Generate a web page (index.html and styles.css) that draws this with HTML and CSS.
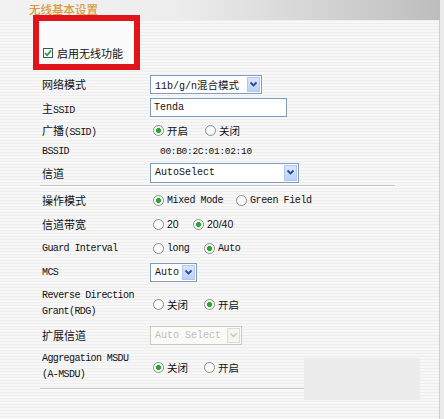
FILE: index.html
```html
<!DOCTYPE html>
<html>
<head>
<meta charset="utf-8">
<link rel="stylesheet" href="styles.css">
</head>
<body>
<div class="page">
  <div class="header"><span class="title">无线基本设置</span></div>
  <div class="enable">
    <span class="cb"><svg width="8" height="8" viewBox="0 0 8 8"><path d="M1 4 L3.2 6.2 L7 1.6" fill="none" stroke="#1f9a2a" stroke-width="1.6"/></svg></span>
    <span class="cn">启用无线功能</span>
  </div>
  <div class="form">
    <div class="row h24">
      <div class="lbl"><span class="cn">网络模式</span></div>
      <div class="val"><div class="sel w-mode"><span class="sel-text">11b/g/n<span class="cn s">混合模式</span></span><span class="arrow"><svg width="9" height="7" viewBox="0 0 9 7"><path d="M1.5 1.5 L4.5 4.5 L7.5 1.5" fill="none" stroke="#2b4a9a" stroke-width="1.8"/></svg></span></div></div>
    </div>
    <div class="row h23">
      <div class="lbl"><span class="cn">主</span>SSID</div>
      <div class="val"><div class="inp">Tenda</div></div>
    </div>
    <div class="row h22">
      <div class="lbl"><span class="cn">广播</span>(SSID)</div>
      <div class="val radios">
        <span class="opt o52"><span class="radio on"></span><span class="cn s">开启</span></span>
        <span class="opt"><span class="radio"></span><span class="cn s">关闭</span></span>
      </div>
    </div>
    <div class="row h21">
      <div class="lbl">BSSID</div>
      <div class="val mac">00:B0:2C:01:02:10</div>
    </div>
    <div class="row h21">
      <div class="lbl"><span class="cn">信道</span></div>
      <div class="val"><div class="sel w-chan"><span class="sel-text">AutoSelect</span><span class="arrow"><svg width="9" height="7" viewBox="0 0 9 7"><path d="M1.5 1.5 L4.5 4.5 L7.5 1.5" fill="none" stroke="#2b4a9a" stroke-width="1.8"/></svg></span></div></div>
    </div>
    <div class="sep"></div>
    <div class="row h24">
      <div class="lbl"><span class="cn">操作模式</span></div>
      <div class="val radios">
        <span class="opt o83"><span class="radio on"></span><span class="en">Mixed Mode</span></span>
        <span class="opt"><span class="radio"></span><span class="en">Green Field</span></span>
      </div>
    </div>
    <div class="row h24">
      <div class="lbl"><span class="cn">信道带宽</span></div>
      <div class="val radios">
        <span class="opt o40"><span class="radio"></span><span class="num">20</span></span>
        <span class="opt"><span class="radio on"></span><span class="num">20/40</span></span>
      </div>
    </div>
    <div class="row h24">
      <div class="lbl">Guard Interval</div>
      <div class="val radios">
        <span class="opt o51"><span class="radio"></span><span class="en">long</span></span>
        <span class="opt"><span class="radio on"></span><span class="en">Auto</span></span>
      </div>
    </div>
    <div class="row h24">
      <div class="lbl">MCS</div>
      <div class="val"><div class="sel w-mcs"><span class="sel-text">Auto</span><span class="arrow"><svg width="9" height="7" viewBox="0 0 9 7"><path d="M1.5 1.5 L4.5 4.5 L7.5 1.5" fill="none" stroke="#2b4a9a" stroke-width="1.8"/></svg></span></div></div>
    </div>
    <div class="row h40">
      <div class="lbl two">Reverse Direction<br>Grant(RDG)</div>
      <div class="val radios">
        <span class="opt o51"><span class="radio"></span><span class="cn s">关闭</span></span>
        <span class="opt"><span class="radio on"></span><span class="cn s">开启</span></span>
      </div>
    </div>
    <div class="row h22">
      <div class="lbl"><span class="cn">扩展信道</span></div>
      <div class="val"><div class="sel w-ext dis"><span class="sel-text">Auto Select</span><span class="arrow"><svg width="9" height="7" viewBox="0 0 9 7"><path d="M1.5 1.5 L4.5 4.5 L7.5 1.5" fill="none" stroke="#c4c4b4" stroke-width="1.4"/></svg></span></div></div>
    </div>
    <div class="row h42">
      <div class="lbl two">Aggregation MSDU<br>(A-MSDU)</div>
      <div class="val radios">
        <span class="opt o51"><span class="radio on"></span><span class="cn s">关闭</span></span>
        <span class="opt"><span class="radio"></span><span class="cn s">开启</span></span>
      </div>
    </div>
    <div class="sep bottom"></div>
  </div>
  <div class="watermark"></div>
</div>
</body>
</html>
```

FILE: styles.css
```css
* { box-sizing: border-box; }
html, body { margin: 0; padding: 0; }
body {
  width: 444px;
  height: 419px;
  overflow: hidden;
  color: #111;
  font-family: "Liberation Mono", "Noto Sans CJK SC", monospace;
}
.page {
  position: relative;
  width: 444px;
  height: 419px;
  background: repeating-linear-gradient(to bottom, #f7f7f7 0, #f7f7f7 2px, #eeeeee 2px, #eeeeee 3px);
  border-right: 4px solid #ececec;
  box-shadow: inset -1px 0 0 #cdcdcd;
}
.header {
  height: 20px;
  background: linear-gradient(to right, #f2f2f2 0%, #ededed 40%, #d6d6d6 70%, #bdbdbd 100%);
  padding-left: 29px;
  line-height: 18px;
}
.title {
  font-family: "Noto Sans CJK SC", sans-serif;
  font-size: 11.5px;
  font-weight: 500;
  color: #dd9a3c;
}
.cn {
  font-family: "Noto Sans CJK SC", sans-serif;
  font-size: 11px;
}
.cn.s { font-size: 10.5px; }
.enable {
  margin-left: 33px;
  margin-top: -5px;
  width: 107px;
  height: 55px;
  border: 6px solid #e1141b;
  background: #fbfbfb;
  display: flex;
  align-items: center;
  padding: 20px 0 0 4px;
  gap: 4px;
}
.cb {
  width: 10px;
  height: 10px;
  border: 1px solid #3a5a6a;
  background: #fff;
  display: flex;
  align-items: center;
  justify-content: center;
}
.form {
  margin-left: 40px;
  margin-top: 2px;
  width: 355px;
}
.row {
  display: flex;
  align-items: center;
}
.h21 { height: 21px; }
.h22 { height: 22px; }
.h23 { height: 23px; }
.h24 { height: 24px; }
.h40 { height: 40px; }
.h42 { height: 42px; }
.lbl {
  width: 110px;
  padding-left: 2px;
  font-size: 10px;
  letter-spacing: -0.6px;
  white-space: nowrap;
}
.lbl .cn { letter-spacing: 0; }
.lbl.two { line-height: 16px; }
.val {
  display: flex;
  align-items: center;
}
.sel {
  display: flex;
  align-items: center;
  height: 19px;
  border: 1px solid #7f9db9;
  background: #fff;
  padding: 1px;
}
.sel-text {
  flex: 1;
  padding-left: 3px;
  font-size: 10px;
  white-space: nowrap;
}
.arrow {
  width: 13px;
  height: 15px;
  background: linear-gradient(#dbe6fb, #bcd0f6);
  border: 1px solid #b3c6ee;
  display: flex;
  align-items: center;
  justify-content: center;
}
.w-mode { width: 112px; }
.w-chan { width: 149px; height: 20px; }
.w-chan .arrow { height: 16px; }
.w-mcs { width: 47px; }
.w-ext { width: 92px; }
.sel.dis { border-color: #c9c9bf; background: #fafaf6; }
.dis .sel-text { color: #bdbdbd; }
.dis .arrow { background: #f6f6ee; border-color: #dcdcd0; }
.inp {
  width: 137px;
  height: 19px;
  border: 1px solid #7f9db9;
  background: #fff;
  font-size: 10px;
  padding-left: 3px;
  line-height: 17px;
}
.mac {
  padding-left: 10px;
  font-size: 9.5px;
  letter-spacing: -0.3px;
}
.radios { padding-left: 3px; }
.opt {
  display: flex;
  align-items: center;
  gap: 3px;
}
.o52 { width: 52px; }
.o83 { width: 83px; }
.o40 { width: 40px; }
.o51 { width: 51px; }
.radio {
  width: 11px;
  height: 11px;
  border-radius: 50%;
  border: 1px solid #8a9098;
  background: radial-gradient(circle, #ffffff 40%, #e8e8e8 100%);
}
.radio.on {
  background: radial-gradient(circle, #2aa339 0, #2aa339 2.2px, #eef8d8 2.8px, #eef8d8 3.6px, #fff 4.2px);
}
.en { font-size: 10px; letter-spacing: -0.4px; }
.num { font-size: 10.5px; font-family: "Liberation Sans", sans-serif; }
.sep {
  margin-top: 2px;
  height: 2px;
  border-top: 1px solid #c3c3c3;
  background: #fff;
  margin-bottom: 1px;
}
.sep.bottom { margin-top: 0; }
.watermark {
  position: absolute;
  left: 304px;
  top: 358px;
  width: 116px;
  height: 42px;
  background: #ececec;
}
```
